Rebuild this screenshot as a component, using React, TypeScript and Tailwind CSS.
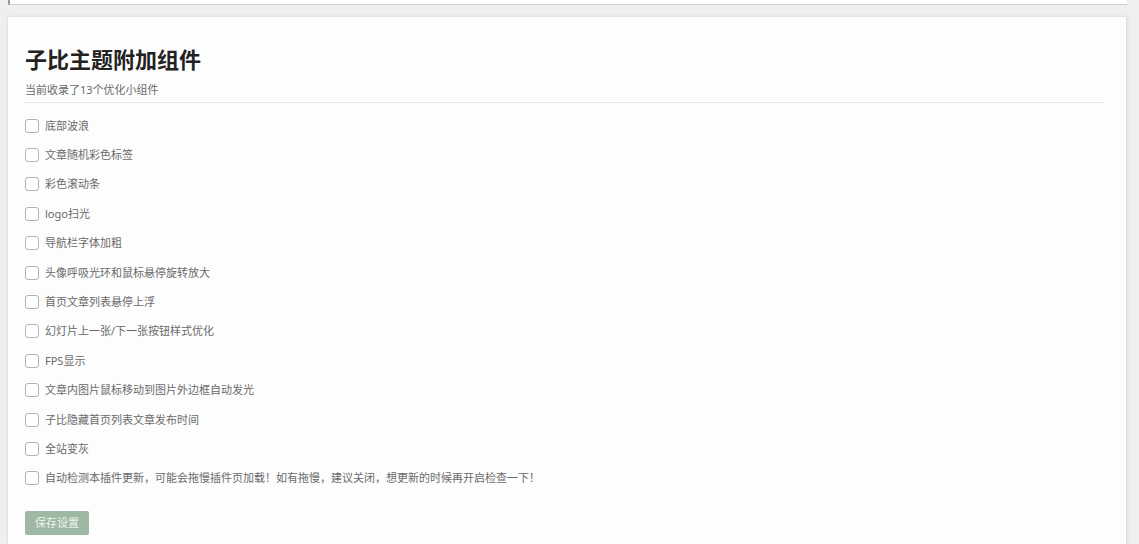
import React, { useState } from 'react';

interface Widget {
  id: string;
  label: string;
}

const WIDGETS: Widget[] = [
  { id: 'footer-wave', label: '底部波浪' },
  { id: 'color-tags', label: '文章随机彩色标签' },
  { id: 'color-scrollbar', label: '彩色滚动条' },
  { id: 'logo-shine', label: 'logo扫光' },
  { id: 'nav-bold', label: '导航栏字体加粗' },
  { id: 'avatar-halo', label: '头像呼吸光环和鼠标悬停旋转放大' },
  { id: 'list-float', label: '首页文章列表悬停上浮' },
  { id: 'slider-buttons', label: '幻灯片上一张/下一张按钮样式优化' },
  { id: 'fps', label: 'FPS显示' },
  { id: 'image-glow', label: '文章内图片鼠标移动到图片外边框自动发光' },
  { id: 'hide-time', label: '子比隐藏首页列表文章发布时间' },
  { id: 'gray-site', label: '全站变灰' },
  { id: 'auto-update', label: '自动检测本插件更新，可能会拖慢插件页加载！如有拖慢，建议关闭，想更新的时候再开启检查一下！' },
];

export default function App() {
  const [enabled, setEnabled] = useState<Record<string, boolean>>({});

  const toggle = (id: string) => {
    setEnabled((prev) => ({ ...prev, [id]: !prev[id] }));
  };

  return (
    <div className="min-h-screen flex flex-col gap-3 bg-[#efefef] pl-2 pr-3 font-['Noto_Sans','Noto_Sans_CJK_SC',sans-serif] text-[11px] leading-4 text-[#6a6a6a]">
      {/* Lower edge of the notice above the panel */}
      <div className="h-[5px] shrink-0 bg-white border-b border-l-2 border-b-[#cfcfcf] border-l-[#999999]" />

      <main className="flex-1 bg-[#fdfdfd] pl-[17px] pr-[22px] pt-6 pb-2 border-r border-[#dedede] shadow-[0_0_3px_rgba(0,0,0,0.12)]">
        <header className="border-b border-[#e6e6e6] pb-1">
          <h1 className="text-[22px] leading-9 font-bold text-[#222222]">子比主题附加组件</h1>
          <p className="mt-[5px]">当前收录了13个优化小组件</p>
        </header>

        <form onSubmit={(e) => e.preventDefault()}>
          <ul className="mt-2 grid auto-rows-fr min-h-[382px]">
            {WIDGETS.map((w) => (
              <li key={w.id} className="flex items-center">
                <label htmlFor={w.id} className="flex items-center gap-1.5">
                  <input
                    id={w.id}
                    type="checkbox"
                    checked={!!enabled[w.id]}
                    onChange={() => toggle(w.id)}
                    className="appearance-none size-3.5 shrink-0 rounded-[3px] border border-[#b4b4b4] bg-white checked:bg-[#9fb8a3]"
                  />
                  <span>{w.label}</span>
                </label>
              </li>
            ))}
          </ul>

          <button type="submit" className="mt-[18px] h-6 px-2.5 rounded-[2px] bg-[#9fb8a3] text-[#edf6ee]">
            保存设置
          </button>
        </form>
      </main>
    </div>
  );
}
